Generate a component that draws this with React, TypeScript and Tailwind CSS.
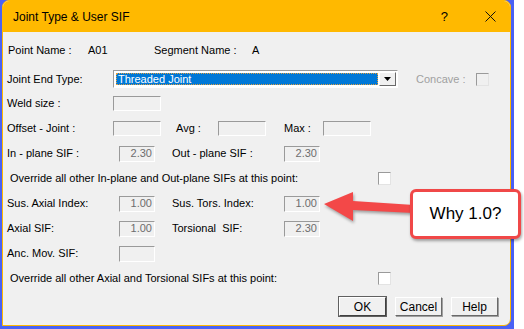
import React from "react";

const font = { fontFamily: '"Liberation Sans", Arial, sans-serif' };

function Field({ w, value }: { w: number; value?: string }) {
  // sunken read-only edit box
  const cls =
    w === 36
      ? "w-[36px] h-[16px]"
      : "w-[48px] h-[15px]";
  return (
    <div
      className={`${cls} shrink-0 border border-t-[#9a9a9a] border-l-[#9a9a9a] border-b-white border-r-white bg-[#f0f0f0] flex items-center justify-end pr-[2px] text-[11px] leading-none text-[#6d6d6d]`}
    >
      {value}
    </div>
  );
}

function Check({ disabled }: { disabled?: boolean }) {
  return (
    <div
      className={`w-[13px] h-[13px] shrink-0 border border-t-[#9a9a9a] border-l-[#9a9a9a] border-b-[#e3e3e3] border-r-[#e3e3e3] ${
        disabled ? "bg-[#f0f0f0]" : "bg-white"
      }`}
    />
  );
}

function Btn({ label, def }: { label: string; def?: boolean }) {
  return (
    <div
      className={`w-[47px] h-[19px] flex items-center justify-center text-[12px] text-black bg-[#f0f0f0] border ${
        def
          ? "border-t-white border-l-white border-b-[#404040] border-r-[#404040] outline outline-1 outline-[#606060]"
          : "border-t-white border-l-white border-b-[#696969] border-r-[#696969] shadow-[1px_1px_0_#a0a0a0]"
      }`}
    >
      {label}
    </div>
  );
}

function SifRow({
  a,
  av,
  b,
  bv,
}: {
  a: string;
  av?: string;
  b?: string;
  bv?: string;
}) {
  return (
    <div className="h-[25px] flex items-center">
      <div className="w-[112px] shrink-0">{a}</div>
      <Field w={36} value={av} />
      {b && (
        <>
          <div className="w-[112px] shrink-0 ml-[17px] whitespace-pre">{b}</div>
          <Field w={36} value={bv} />
        </>
      )}
    </div>
  );
}

function OverrideRow({ text }: { text: string }) {
  return (
    <div className="h-[25px] flex items-center">
      <div className="w-[371px] shrink-0 pl-[3px]">{text}</div>
      <Check />
    </div>
  );
}

export default function App() {
  return (
    <div className="w-[524px] h-[329px] bg-white relative overflow-hidden" style={font}>
      {/* blue frame */}
      <div className="w-[514px] h-[329px] bg-[#4a62f4]">
        <div className="ml-[2px] w-[509px] h-[326px] border border-[#ffb900] rounded-t-[7px] rounded-br-[7px] bg-[#f0f0f0] overflow-hidden flex flex-col">
          {/* title bar */}
          <div className="h-[31px] shrink-0 bg-[#ffb900] flex items-center pl-[10px] pr-[14px] text-[12px] text-black">
            <span className="flex-1">Joint Type &amp; User SIF</span>
            <span className="text-[13px] mr-[37px]">?</span>
            <svg width="11" height="11" viewBox="0 0 11 11">
              <path d="M0.5 0.5 L10.5 10.5 M10.5 0.5 L0.5 10.5" stroke="#111" strokeWidth="1" />
            </svg>
          </div>

          {/* body */}
          <div className="flex flex-col pl-[4px] pt-[6px] text-[11px] text-black">
            <div className="h-[24px] flex items-center pl-[1px]">
              <div className="w-[80px] shrink-0">Point Name :</div>
              <div className="w-[66px] shrink-0">A01</div>
              <div className="w-[98px] shrink-0">Segment Name :</div>
              <div>A</div>
            </div>

            <div className="mt-[5px] h-[24px] flex items-center">
              <div className="w-[106px] shrink-0">Joint End Type:</div>
              <div className="w-[285px] h-[18px] shrink-0 border border-t-[#9a9a9a] border-l-[#9a9a9a] border-b-white border-r-white bg-white flex items-center p-[1px]">
                <div className="flex-1 h-full flex items-center p-[1px] bg-white">
                  <div className="w-full h-full bg-[#0078d7] outline outline-1 outline-dotted outline-[#e0a040] -outline-offset-1 text-white flex items-center pl-[2px]">
                    Threaded Joint
                  </div>
                </div>
                <div className="w-[17px] h-full shrink-0 bg-[#f0f0f0] border border-t-white border-l-white border-b-[#696969] border-r-[#696969] flex items-center justify-center">
                  <svg width="7" height="4" viewBox="0 0 7 4">
                    <path d="M0 0 H7 L3.5 4 Z" fill="#000" />
                  </svg>
                </div>
              </div>
              <div className="ml-[18px] w-[60px] shrink-0 text-[#a0a0a0]">Concave :</div>
              <Check disabled />
            </div>

            <div className="h-[25px] flex items-center">
              <div className="w-[106px] shrink-0">Weld size :</div>
              <Field w={48} />
            </div>

            <div className="h-[25px] flex items-center">
              <div className="w-[106px] shrink-0">Offset - Joint :</div>
              <Field w={48} />
              <div className="ml-[15px] w-[42px] shrink-0">Avg :</div>
              <Field w={48} />
              <div className="ml-[18px] w-[39px] shrink-0">Max :</div>
              <Field w={48} />
            </div>

            <SifRow a="In - plane SIF :" av="2.30" b="Out - plane SIF :" bv="2.30" />
            <OverrideRow text="Override all other In-plane and Out-plane SIFs at this point:" />
            <SifRow a="Sus. Axial Index:" av="1.00" b="Sus. Tors. Index:" bv="1.00" />
            <SifRow a="Axial SIF:" av="1.00" b="Torsional  SIF:" bv="2.30" />
            <SifRow a="Anc. Mov. SIF:" />
            <OverrideRow text="Override all other Axial and Torsional SIFs at this point:" />

            <div className="mt-[6px] flex justify-end gap-[9px] pr-[12px]">
              <Btn label="OK" def />
              <Btn label="Cancel" />
              <Btn label="Help" />
            </div>
          </div>
        </div>
      </div>

      {/* annotation arrow */}
      <svg
        className="absolute left-[320px] top-[185px]"
        width="96"
        height="44"
        viewBox="0 0 96 44"
        style={{ filter: "drop-shadow(1px 2px 1.5px rgba(0,0,0,0.35))" }}
      >
        <path d="M4 19 L33 7 L33 16 L94 20 L94 28 L33 25 L33 36 Z" fill="#f34848" />
      </svg>

      {/* callout */}
      <div className="absolute left-[410px] top-[189px] w-[111px] h-[50px] bg-white border-[3px] border-[#f04848] rounded-[6px] shadow-[1px_2px_3px_rgba(0,0,0,0.35)] flex items-center justify-center text-[17px] text-black">
        Why 1.0?
      </div>
    </div>
  );
}
